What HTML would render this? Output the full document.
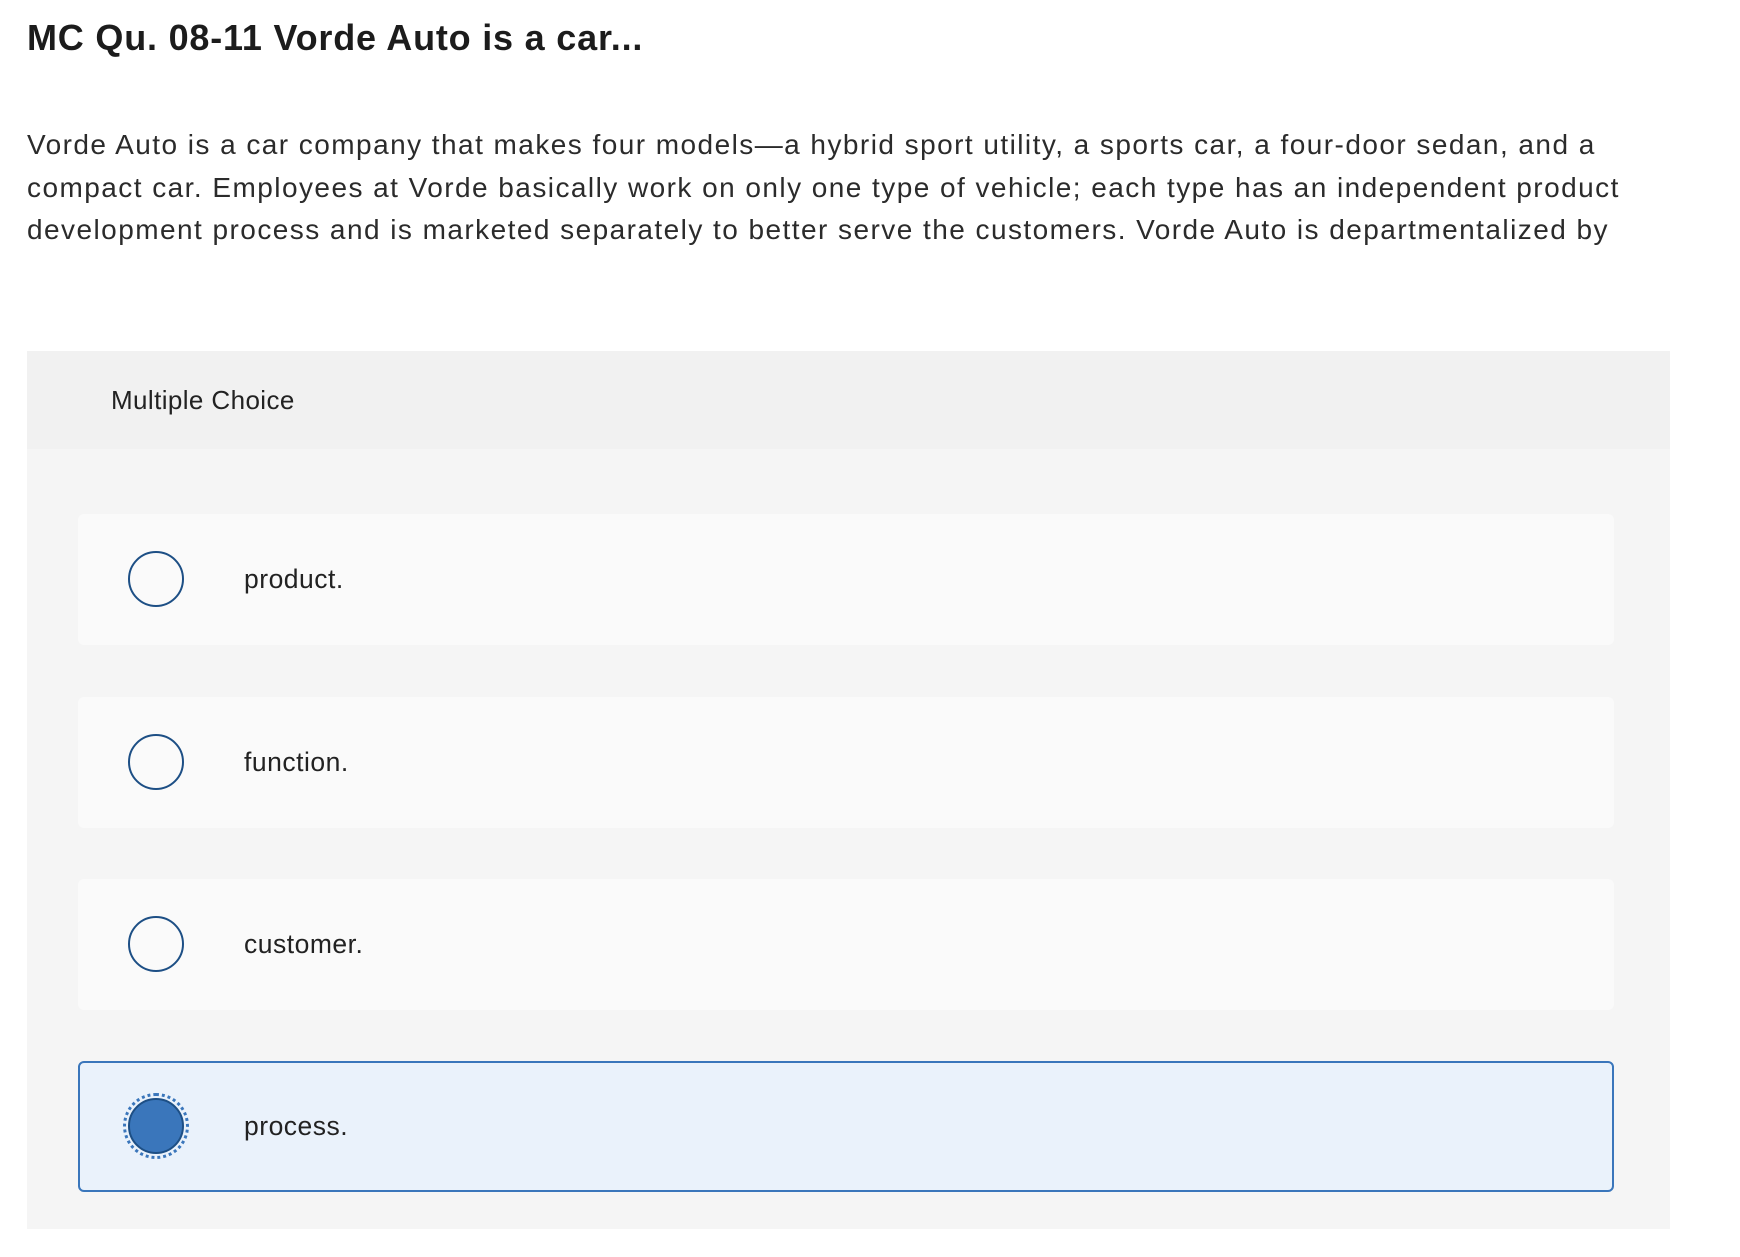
<!DOCTYPE html>
<html><head><style>
body{margin:0;background:#fff;font-family:"Liberation Sans",sans-serif;color:#222;width:1740px;height:1257px;position:relative;overflow:hidden}
.t{position:absolute;left:27px;top:17px;font-size:36px;font-weight:bold;color:#1c1c1c;letter-spacing:0.8px}
.p{position:absolute;left:27px;top:124px;font-size:28px;line-height:42.5px;color:#2b2b2b;letter-spacing:1.45px;white-space:nowrap}
.panel{position:absolute;left:27px;top:351px;width:1643px;height:878px;background:#f5f5f5}
.hd{height:98px;background:#f1f1f1;font-size:26px;letter-spacing:0.4px;line-height:98px;padding-left:84px;color:#222}
.o{position:absolute;left:51px;width:1536px;height:131px;background:#fafafa;border-radius:6px;box-sizing:border-box}
.o .c{position:absolute;left:50px;top:37px;width:56px;height:56px;border:2px solid #1d4f85;border-radius:50%;box-sizing:border-box}
.o span{position:absolute;left:166px;top:0;line-height:131px;font-size:26.5px;letter-spacing:0.5px;color:#222}
.sel{background:#eaf2fb;border:2px solid #3a76bb}
.sel .c{left:48px;top:35px;background:#3a76bb;border:2px solid #1d4f85;outline:3px dotted #3a76bb;outline-offset:2px}
.sel span{left:164px;line-height:127px}
</style></head><body>
<div class="t">MC Qu. 08-11 Vorde Auto is a car...</div>
<div class="p">Vorde Auto is a car company that makes four models—a hybrid sport utility, a sports car, a four-door sedan, and a<br>compact car. Employees at Vorde basically work on only one type of vehicle; each type has an independent product<br>development process and is marketed separately to better serve the customers. Vorde Auto is departmentalized by</div>
<div class="panel">
<div class="hd">Multiple Choice</div>
<div class="o" style="top:163px"><div class="c"></div><span>product.</span></div>
<div class="o" style="top:346px"><div class="c"></div><span>function.</span></div>
<div class="o" style="top:528px"><div class="c"></div><span>customer.</span></div>
<div class="o sel" style="top:710px"><div class="c"></div><span>process.</span></div>
</div>
</body></html>
